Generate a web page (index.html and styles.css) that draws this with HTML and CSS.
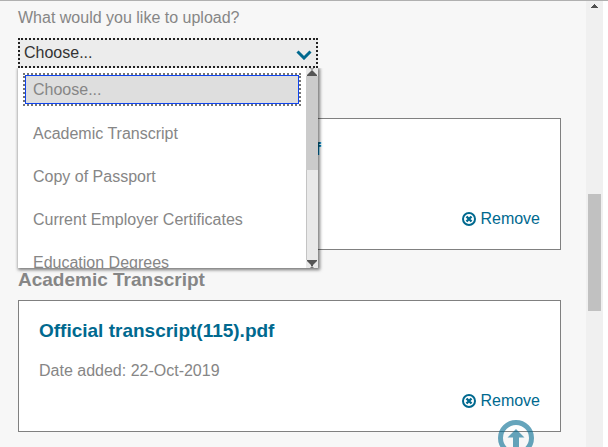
FILE: index.html
```html
<!DOCTYPE html>
<html lang="en">
<head>
    <meta charset="UTF-8">
    <meta name="viewport" content="width=device-width, initial-scale=1.0">
    <title>Upload documents</title>
    <link rel="stylesheet" href="styles.css">
</head>
<body>
    <div class="page">
        <main class="content">
            <label class="upload-label" for="docType">What would you like to upload?</label>
            <div class="dropdown">
                <select id="docType" class="dropdown-select">
                    <option>Choose...</option>
                    <option>Academic Transcript</option>
                    <option>Copy of Passport</option>
                    <option>Current Employer Certificates</option>
                    <option>Education Degrees</option>
                </select>
                <svg class="dropdown-arrow" viewBox="0 0 16 10" aria-hidden="true">
                    <path d="M1.500 1.500 L8 8 L14.500 1.500" fill="none" stroke="#00698f" stroke-width="3"/>
                </svg>
                <div class="menu">
                    <ul class="menu-list">
                        <li><button type="button" class="option selected">Choose...</button></li>
                        <li><button type="button" class="option">Academic Transcript</button></li>
                        <li><button type="button" class="option">Copy of Passport</button></li>
                        <li><button type="button" class="option">Current Employer Certificates</button></li>
                        <li><button type="button" class="option">Education Degrees</button></li>
                    </ul>
                    <div class="menu-scroll">
                        <svg class="menu-scroll-arrow" viewBox="0 0 12 8" aria-hidden="true">
                            <path d="M4 0h4v1h-1v1h-2v-1h-1z" fill="#aaa"/>
                            <path d="M6 2 L11 7 V8 H1 V7z" fill="#555"/>
                        </svg>
                        <div class="menu-thumb"></div>
                        <div class="menu-track"></div>
                        <svg class="menu-scroll-arrow" viewBox="0 0 12 8" aria-hidden="true">
                            <path d="M1 0 H11 V1 L7 5 V6 H5 V5 L1 1z" fill="#555"/>
                            <path d="M5.500 6h1v1h1v1h-3v-1h1z" fill="#777"/>
                        </svg>
                    </div>
                </div>
            </div>

            <section class="document first">
                <div class="card">
                    <a class="file" href="#">Official transcript(1)(2)(115).pdf</a>
                    <button type="button" class="remove">
                        <svg class="remove-icon" viewBox="0 0 14 14" aria-hidden="true">
                            <circle cx="7" cy="7" r="6" fill="none" stroke="#00698f" stroke-width="2"/>
                            <path d="M4.500 4.500 L9.500 9.500 M9.500 4.500 L4.500 9.500" stroke="#00698f" stroke-width="2.400"/>
                        </svg>
                        Remove
                    </button>
                </div>
            </section>

            <section class="document">
                <h2>Academic Transcript</h2>
                <div class="card">
                    <a class="file" href="#">Official transcript(115).pdf</a>
                    <p>Date added: 22-Oct-2019</p>
                    <button type="button" class="remove">
                        <svg class="remove-icon" viewBox="0 0 14 14" aria-hidden="true">
                            <circle cx="7" cy="7" r="6" fill="none" stroke="#00698f" stroke-width="2"/>
                            <path d="M4.500 4.500 L9.500 9.500 M9.500 4.500 L4.500 9.500" stroke="#00698f" stroke-width="2.400"/>
                        </svg>
                        Remove
                    </button>
                </div>
            </section>
        </main>

        <div class="scrollbar">
            <svg class="scrollbar-arrow" viewBox="0 0 7 4" aria-hidden="true">
                <path d="M3 0h1v1h1v1h1v1h1v1h-7v-1h1v-1h1v-1h1z" fill="#505050"/>
            </svg>
            <div class="scrollbar-thumb"></div>
        </div>
    </div>

    <a class="to-top" href="#" aria-label="Back to top">
        <svg viewBox="0 0 36 36" aria-hidden="true">
            <circle cx="18" cy="18" r="15.500" fill="none" stroke="#00698f" stroke-width="5"/>
            <path d="M18 9 L26.500 17.500 H21 V27 H15 V17.500 H9.500z" fill="#00698f"/>
        </svg>
    </a>
</body>
</html>
```

FILE: styles.css
```css
* {
    box-sizing: border-box;
}
body {
    margin: 0;
    font-family: "Liberation Sans", Arial, sans-serif;
    font-size: 16px;
    line-height: 20px;
    color: #868686;
    background-color: #fff;
}
button, select {
    font: inherit;
}
.page {
    display: flex;
    height: 100vh;
    padding-right: 5px;
    border-top: 1px solid #b0b0b0;
    overflow: hidden;
}
.content {
    flex: 1;
    padding: 7px 25px 0 18px;
    background-color: #f7f7f7;
}
.upload-label {
    display: block;
    margin-bottom: 10px;
}

/* dropdown */
.dropdown {
    position: relative;
    max-width: 300px;
}
.dropdown-select {
    display: block;
    width: 100%;
    height: 30px;
    padding: 0 4px;
    border: 2px dotted #222;
    border-radius: 0;
    appearance: none;
    background-color: #ececec;
    color: #333;
}
.dropdown-arrow {
    position: absolute;
    top: 12px;
    right: 6px;
    width: 16px;
    height: 10px;
    pointer-events: none;
}
.menu {
    position: absolute;
    top: 100%;
    left: 0;
    display: flex;
    width: 100%;
    height: 200px;
    background-color: #fff;
    box-shadow: 1px 1px 3px 1px rgba(0, 0, 0, 0.5);
    clip-path: inset(0 -6px -6px -3px);
}
.menu-list {
    flex: 1;
    margin: 0;
    padding: 7px;
    list-style: none;
    overflow: hidden;
}
.option {
    display: block;
    width: 100%;
    height: 29px;
    margin-bottom: 14px;
    padding: 0 7px;
    border: 1px solid transparent;
    background: none;
    color: inherit;
    text-align: left;
    cursor: pointer;
}
.option.selected {
    margin-bottom: 15px;
    border-color: #0f45f0;
    outline: 2px dotted #757575;
    background-color: #dedede;
}
.menu-scroll {
    display: flex;
    flex-direction: column;
    width: 12px;
    background-color: #e9e9e9;
}
.menu-scroll-arrow {
    width: 12px;
    height: 8px;
}
.menu-thumb {
    height: 94px;
    background-color: #cbcbcb;
}
.menu-track {
    flex: 1;
    border-left: 1px solid #c4c4c4;
}

/* uploaded documents */
.document {
    margin-top: 20px;
}
.document.first {
    margin-top: 50px;
}
.document h2 {
    margin: 0 0 10px;
    font-size: 19px;
    line-height: 20px;
}
.card {
    display: flex;
    flex-direction: column;
    align-items: flex-start;
    min-height: 132px;
    padding: 18px 20px 20px;
    border: 1px solid #808080;
    background-color: #fff;
}
.card p {
    margin: 18px 0 10px;
}
.file {
    font-size: 19px;
    font-weight: bold;
    line-height: 24px;
    color: #00698f;
    text-decoration: none;
}
.remove {
    display: flex;
    align-items: center;
    align-self: flex-end;
    gap: 4px;
    margin-top: auto;
    padding: 0;
    border: none;
    background: none;
    color: #00698f;
    cursor: pointer;
}
.remove-icon {
    width: 14px;
    height: 14px;
}

/* page scrollbar */
.scrollbar {
    display: flex;
    flex-direction: column;
    align-items: center;
    width: 17px;
    padding-top: 3px;
    background-color: #f0f0f0;
}
.scrollbar-arrow {
    width: 7px;
    height: 4px;
}
.scrollbar-thumb {
    width: 13px;
    height: 117px;
    margin-top: 186px;
    background-color: #c1c1c1;
}

.to-top {
    position: fixed;
    right: 74px;
    bottom: -9px;
    width: 36px;
    height: 36px;
    opacity: 0.6;
}
```
